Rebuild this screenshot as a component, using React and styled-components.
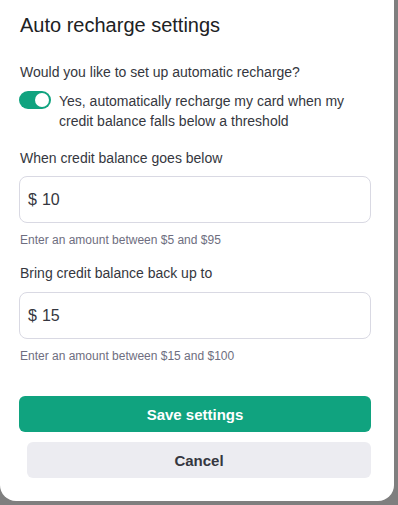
import React, { useState } from 'react'
import styled, { createGlobalStyle } from 'styled-components'

const GlobalStyle = createGlobalStyle`
  html, body {
    margin: 0;
    padding: 0;
    background: #7f7f7f;
  }
  body {
    font-family: "Liberation Sans", Arial, sans-serif;
  }
`

const Page = styled.div`
  width: 398px;
  height: 505px;
  overflow: hidden;
  display: flex;
  align-items: flex-end;
`

const Modal = styled.div`
  width: 394px;
  height: 521px;
  box-sizing: border-box;
  background: #fff;
  border-radius: 16px;
  padding: 31px 23px 0 19px;
  margin-bottom: 4px;
  display: flex;
  flex-direction: column;
  color: #353740;
`

const Title = styled.h2`
  margin: 0 0 0 1px;
  font-size: 20px;
  font-weight: 400;
  line-height: 28px;
  color: #202123;
`

const Question = styled.p`
  margin: 23px 0 0 1px;
  font-size: 14px;
  line-height: 20px;
`

const ToggleRow = styled.label`
  display: flex;
  align-items: flex-start;
  gap: 8px;
  margin-top: 9px;
  font-size: 14px;
  line-height: 20px;
  cursor: pointer;
`

const Track = styled.span`
  flex: none;
  position: relative;
  width: 32px;
  height: 18px;
  border-radius: 9px;
  background: ${p => (p.$on ? '#10a37f' : '#c5c5d2')};
`

const Knob = styled.span`
  position: absolute;
  top: 2px;
  left: ${p => (p.$on ? '16px' : '2px')};
  width: 14px;
  height: 14px;
  border-radius: 50%;
  background: #fff;
`

const FieldLabel = styled.div`
  margin: ${p => (p.$first ? '17px' : '15px')} 0 0 1px;
  font-size: 14px;
  line-height: 20px;
`

const InputBox = styled.div`
  display: flex;
  align-items: center;
  gap: 5px;
  margin-top: ${p => (p.$first ? '8px' : '9px')};
  height: 47px;
  box-sizing: border-box;
  padding: 0 8px;
  border: 1px solid #d9d9e3;
  border-radius: 8px;
  font-size: 16px;
`

const Input = styled.input`
  flex: 1;
  min-width: 0;
  border: 0;
  outline: none;
  padding: 0;
  font: inherit;
  color: #353740;
  background: transparent;
`

const Help = styled.div`
  margin: 9px 0 0 1px;
  font-size: 12px;
  line-height: 16px;
  color: #6e6e80;
`

const Actions = styled.div`
  display: flex;
  flex-direction: column;
  align-items: flex-end;
  gap: 10px;
  margin-top: 32px;
`

const Button = styled.button`
  width: ${p => (p.$primary ? '352px' : '344px')};
  height: 36px;
  border: 0;
  border-radius: 6px;
  font-family: inherit;
  font-size: 15px;
  font-weight: 700;
  background: ${p => (p.$primary ? '#10a37f' : '#ececf1')};
  color: ${p => (p.$primary ? '#fff' : '#353740')};
  cursor: pointer;
`

const Field = ({ label, value, help, first }) => (
  <>
    <FieldLabel $first={first}>{label}</FieldLabel>
    <InputBox $first={first}>
      <span>$</span>
      <Input defaultValue={value} />
    </InputBox>
    <Help>{help}</Help>
  </>
)

export default function App() {
  const [on, setOn] = useState(true)
  return (
    <Page>
      <GlobalStyle />
      <Modal>
        <Title>Auto recharge settings</Title>
        <Question>Would you like to set up automatic recharge?</Question>
        <ToggleRow onClick={() => setOn(!on)}>
          <Track $on={on}><Knob $on={on} /></Track>
          <span>Yes, automatically recharge my card when my credit balance falls below a threshold</span>
        </ToggleRow>
        <Field first label="When credit balance goes below" value="10" help="Enter an amount between $5 and $95" />
        <Field label="Bring credit balance back up to" value="15" help="Enter an amount between $15 and $100" />
        <Actions>
          <Button $primary>Save settings</Button>
          <Button>Cancel</Button>
        </Actions>
      </Modal>
    </Page>
  )
}
